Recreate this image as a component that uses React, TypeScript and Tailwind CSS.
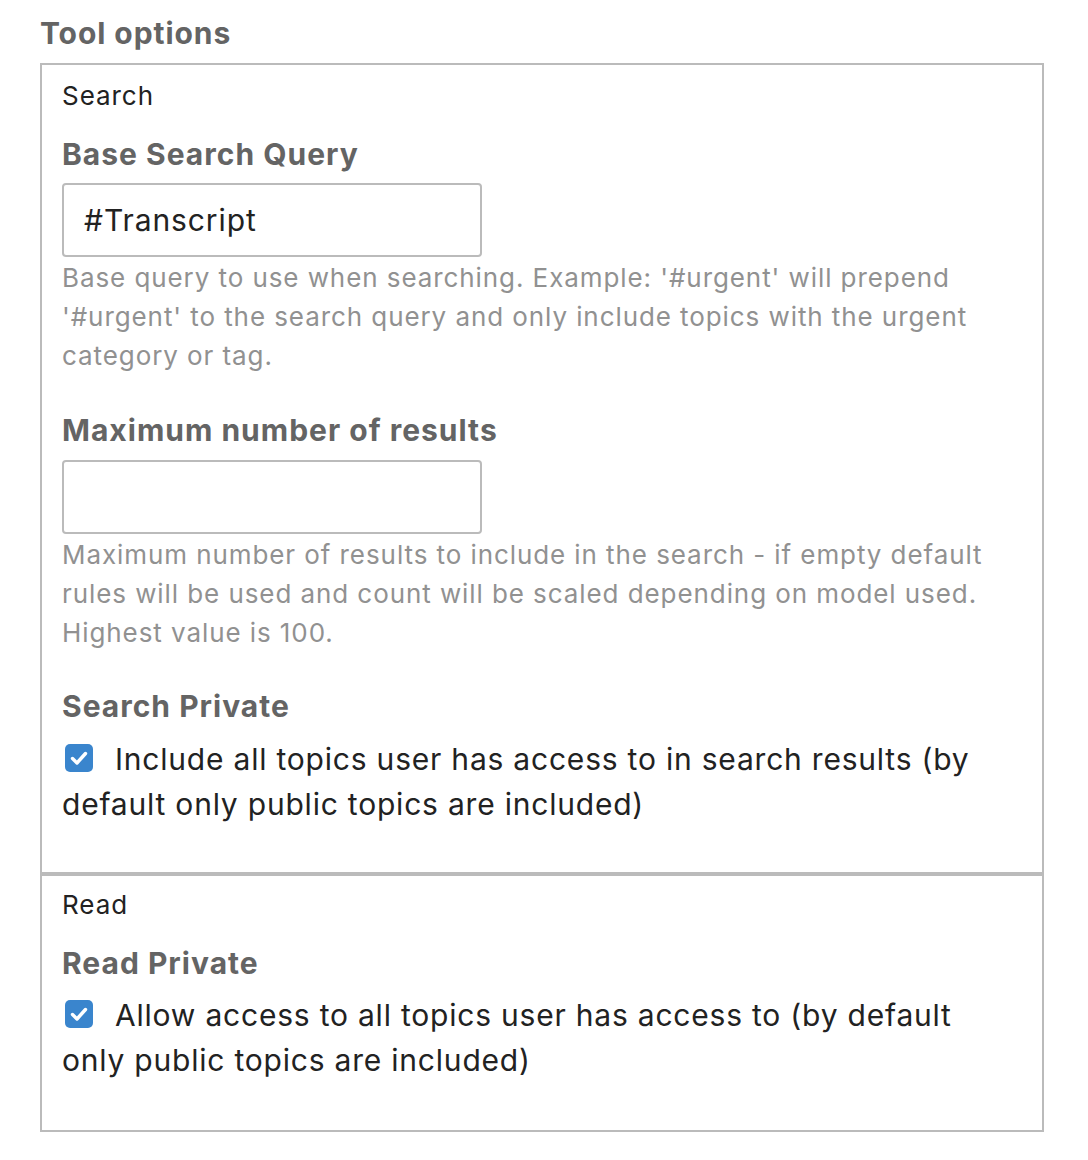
import React from "react";

function Checkbox() {
  return (
    <span className="ml-[3px] mr-[22px] inline-block h-[28px] w-[28px] rounded-[5px] bg-[#3a85cd] align-[-2px]">
      <svg viewBox="0 0 28 28" className="h-[28px] w-[28px]">
        <path
          d="M7.5 14.5 L12 19 L20.5 9.5"
          fill="none"
          stroke="#fff"
          strokeWidth="3.4"
          strokeLinecap="round"
          strokeLinejoin="round"
        />
      </svg>
    </span>
  );
}

function FieldHeading({ children, className = "" }: { children: React.ReactNode; className?: string }) {
  return (
    <div className={`text-[30px] font-bold leading-[38px] tracking-[1px] text-[#646464] ${className}`}>
      {children}
    </div>
  );
}

function Description({ children }: { children: React.ReactNode }) {
  return (
    <div className="mt-[1px] text-[26px] leading-[39px] tracking-[0.92px] text-[#919191]">{children}</div>
  );
}

function TextInput({ value }: { value?: string }) {
  return (
    <div className="flex h-[74px] w-[420px] items-center rounded-[4px] border-2 border-[#bbb] px-[20px] text-[30px] tracking-[0.9px] text-[#222]">
      {value}
    </div>
  );
}

export default function App() {
  return (
    <div className="min-h-[1160px] bg-white pl-[40px] pt-[15px] font-['Inter',sans-serif]">
      <h3 className="mb-[11px] text-[30px] font-bold leading-[37px] tracking-[0.93px] text-[#646464]">
        Tool options
      </h3>

      <div className="w-[1004px] border-2 border-[#bbb]">
        {/* Search */}
        <section className="px-[20px] pb-[45px] pt-[11px]">
          <div className="text-[26px] leading-[39px] tracking-[0.95px] text-[#222]">Search</div>

          <FieldHeading className="mt-[20px]">Base Search Query</FieldHeading>
          <div className="mt-[10px]">
            <TextInput value="#Transcript" />
          </div>
          <Description>
            Base query to use when searching. Example: '#urgent' will prepend '#urgent' to the search query and only
            include topics with the urgent category or tag.
          </Description>

          <FieldHeading className="mt-[36px]">Maximum number of results</FieldHeading>
          <div className="mt-[11px]">
            <TextInput />
          </div>
          <Description>
            Maximum number of results to include in the search - if empty default rules will be used and count will
            be scaled depending on model used. Highest value is 100.
          </Description>

          <FieldHeading className="mt-[35px]">Search Private</FieldHeading>
          <div className="mt-[12px] text-[30px] leading-[45px] tracking-[0.79px] text-[#222]">
            <Checkbox />
            Include all topics user has access to in search results (by default only public topics are included)
          </div>
        </section>

        {/* Read */}
        <section className="border-t-4 border-[#bbb] px-[20px] pb-[47px] pt-[9px]">
          <div className="text-[26px] leading-[39px] tracking-[0.95px] text-[#222]">Read</div>

          <FieldHeading className="mt-[20px]">Read Private</FieldHeading>
          <div className="mt-[11px] text-[30px] leading-[45px] tracking-[0.79px] text-[#222]">
            <Checkbox />
            Allow access to all topics user has access to (by default only public topics are included)
          </div>
        </section>
      </div>
    </div>
  );
}
